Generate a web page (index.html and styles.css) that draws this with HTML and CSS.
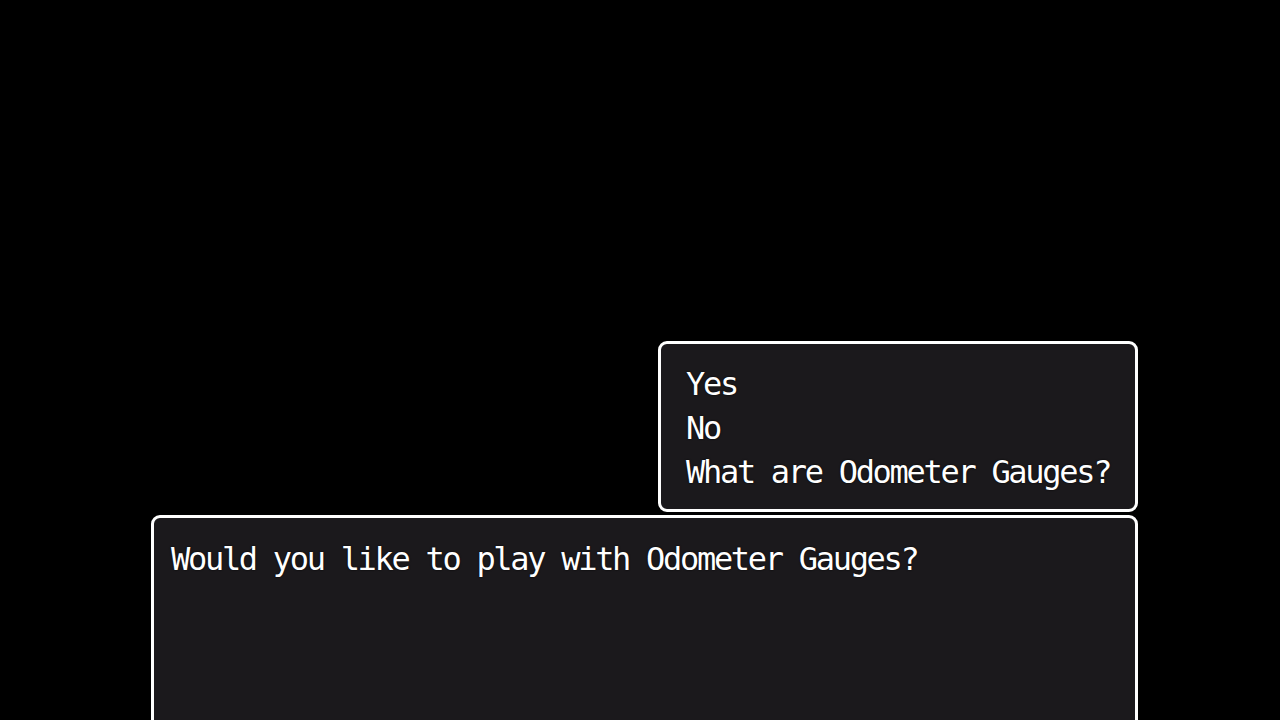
FILE: index.html
```html
<!DOCTYPE html>
<html lang="en">

<head>
    <meta charset="UTF-8">
    <meta name="viewport" content="width=device-width, initial-scale=1.0">
    <title>Odometer Gauges</title>
    <link rel="stylesheet" href="styles.css">
</head>

<body>
    <div class="scene">
        <div class="windows">
            <ul class="choice-window">
                <li>Yes</li>
                <li>No</li>
                <li>What are Odometer Gauges?</li>
            </ul>
            <div class="message-window">
                <p>Would you like to play with Odometer Gauges?</p>
            </div>
        </div>
    </div>
</body>

</html>
```

FILE: styles.css
```css
html,
body {
    margin: 0;
    height: 100%;
    background: #000;
    overflow: hidden;
}

.scene {
    height: 100%;
    padding: 341px 142px 0 0;
    box-sizing: border-box;
}

.windows {
    display: flex;
    flex-direction: column;
    align-items: flex-end;
    gap: 3px;
}

/* shared window frame */
.choice-window,
.message-window {
    background: #1b191c;
    border: 3px solid #fff;
    border-radius: 9px;
    box-sizing: border-box;
    color: #fff;
    font-family: 'DejaVu Sans Mono', monospace;
    font-size: 32px;
    line-height: 44px;
    letter-spacing: -2.3px;
    text-shadow: 0 0 2px #000;
    margin: 0;
}

.choice-window {
    width: 480px;
    height: 171px;
    list-style: none;
    padding: 18px 20px 0 25px;
}

.message-window {
    width: 987px;
    height: 230px;
    padding: 19px 20px 0 17px;
}

.message-window p {
    margin: 0;
}
```
